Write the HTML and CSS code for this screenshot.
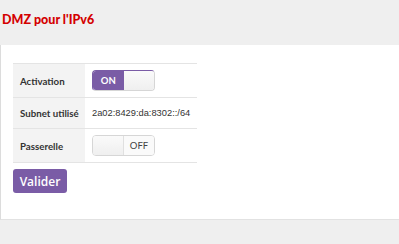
FILE: index.html
```html
<!DOCTYPE html>
<html lang="fr">
<head>
<meta charset="utf-8">
<link rel="stylesheet" href="styles.css">
</head>
<body>
<h1 class="title">DMZ pour l'IPv6</h1>
<div class="panel">
  <table class="form-table">
    <tr class="row-tall">
      <th>Activation</th>
      <td>
        <div class="toggle on"><span class="part active">ON</span><span class="part blank"></span></div>
      </td>
    </tr>
    <tr>
      <th>Subnet utilisé</th>
      <td class="value">2a02:8429:da:8302::/64</td>
    </tr>
    <tr class="row-tall">
      <th>Passerelle</th>
      <td>
        <div class="toggle off"><span class="part blank"></span><span class="part label-off">OFF</span></div>
      </td>
    </tr>
  </table>
  <button class="btn">Valider</button>
</div>
</body>
</html>
```
FILE: styles.css
```css
html, body {
  margin: 0;
  padding: 0;
  background: #efefef;
  font-family: "Lato", "Open Sans", sans-serif;
  color: #333;
}
.title {
  margin: 0;
  padding: 12px 0 0 2px;
  height: 33px;
  box-sizing: border-box;
  font-family: "Lato", "Open Sans", sans-serif;
  font-size: 12.5px;
  font-weight: 900;
  color: #d40000;
  line-height: 16px;
}
.panel {
  margin-top: 12px;
  background: #fff;
  border-left: 1px solid #dcdcdc;
  border-bottom: 1px solid #e2e2e2;
  padding: 18px 0 26px 12px;
}
.form-table {
  border-collapse: collapse;
  table-layout: fixed;
  width: 184px;
}
.form-table th,
.form-table td {
  border-top: 1px solid #e4e4e4;
  border-bottom: 1px solid #e4e4e4;
  padding: 0;
  text-align: left;
  vertical-align: middle;
  white-space: nowrap;
}
.form-table th {
  width: 65px;
  background: #f3f3f3;
  padding-left: 7px;
  font-family: "Lato", "Open Sans", sans-serif;
  font-size: 9.7px;
  font-weight: 700;
  color: #333;
  height: 30px;
}
.form-table td {
  padding-left: 7px;
}
.row-tall th {
  height: 33px;
}
.value {
  font-family: "Liberation Sans", Arial, sans-serif;
  font-size: 9.3px;
  color: #333;
}
.toggle {
  display: flex;
  width: 63px;
  height: 21px;
  box-sizing: border-box;
  border: 1px solid #d6d6d6;
  border-radius: 4px;
  overflow: hidden;
}
.part {
  flex: 1;
  display: flex;
  align-items: center;
  justify-content: center;
  font-size: 9.5px;
  font-weight: 700;
}
.active {
  background: #7a5ca6;
  color: #fff;
}
.toggle.on {
  border-color: #7a5ca6 #d6d6d6 #d6d6d6 #7a5ca6;
}
.blank {
  background: linear-gradient(#fafafa, #efefef);
}
.off .blank {
  border-right: 1px solid #e0e0e0;
}
.label-off {
  background: #fafafa;
  color: #444;
  font-weight: 400;
}
.btn {
  display: block;
  margin-top: 6px;
  width: 54px;
  height: 24px;
  border: none;
  border-radius: 3px;
  background: #7a5ca6;
  color: #fff;
  font-family: "Open Sans", sans-serif;
  font-size: 12px;
  font-weight: 600;
  padding: 0;
}
```
